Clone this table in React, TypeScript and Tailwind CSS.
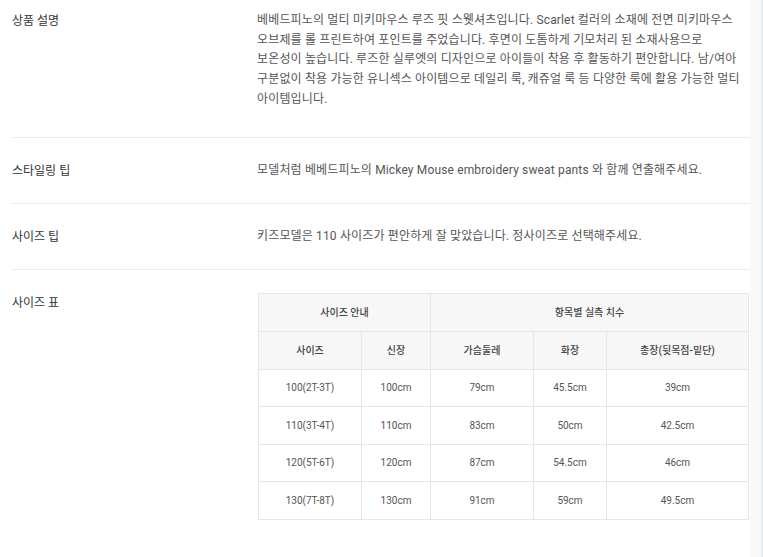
import React from "react";

const font = { fontFamily: 'Roboto, "Noto Sans CJK KR", sans-serif' };

function Row({ label, children, top = "pt-[23px]", bottom = "pb-[22px]" }: { label: string; children: React.ReactNode; top?: string; bottom?: string }) {
  return (
    <div className={`flex ${top} ${bottom} border-b border-[#ebebeb]`}>
      <div className="w-[245px] shrink-0 text-[12px] leading-[20px] text-[#333]">{label}</div>
      <div className="w-[493px] break-keep text-[12px] leading-[19.7px] tracking-[0.15px] text-[#555]">{children}</div>
    </div>
  );
}

const rows = [
  ["100(2T-3T)", "100cm", "79cm", "45.5cm", "39cm"],
  ["110(3T-4T)", "110cm", "83cm", "50cm", "42.5cm"],
  ["120(5T-6T)", "120cm", "87cm", "54.5cm", "46cm"],
  ["130(7T-8T)", "130cm", "91cm", "59cm", "49.5cm"],
];

export default function App() {
  return (
    <div className="flex w-[763px] h-[557px] bg-white overflow-hidden" style={font}>
      <div className="w-[738px] ml-[12px] shrink-0">
        <Row label="상품 설명" top="pt-[11px]" bottom="pb-[27px]">
          베베드피노의 멀티 미키마우스 루즈 핏 스웻셔츠입니다. Scarlet 컬러의 소재에 전면 미키마우스 오브제를 롤 프린트하여 포인트를 주었습니다. 후면이 도톰하게 기모처리 된 소재사용으로 보온성이 높습니다. 루즈한 실루엣의 디자인으로 아이들이 착용 후 활동하기 편안합니다. 남/여아 구분없이 착용 가능한 유니섹스 아이템으로 데일리 룩, 캐쥬얼 룩 등 다양한 룩에 활용 가능한 멀티 아이템입니다.
        </Row>
        <Row label="스타일링 팁">
          모델처럼 베베드피노의 Mickey Mouse embroidery sweat pants 와 함께 연출해주세요.
        </Row>
        <Row label="사이즈 팁">
          키즈모델은 110 사이즈가 편안하게 잘 맞았습니다. 정사이즈로 선택해주세요.
        </Row>
        <div className="flex pt-[23px]">
          <div className="w-[245px] shrink-0 text-[12px] leading-[20px] text-[#333]">사이즈 표</div>
          <div className="flex-1 pl-[1px]">
            <table className="w-[491px] border-collapse text-[10px] text-center">
              <colgroup>
                <col className="w-[103px]" />
                <col className="w-[69px]" />
                <col className="w-[103px]" />
                <col className="w-[73px]" />
                <col />
              </colgroup>
              <thead>
                <tr className="h-[38px] bg-[#f7f7f7] text-[#444]">
                  <th colSpan={2} className="border border-[#e6e6e6] font-medium">사이즈 안내</th>
                  <th colSpan={3} className="border border-[#e6e6e6] font-medium">항목별 실측 치수</th>
                </tr>
                <tr className="h-[38px] bg-[#f7f7f7] text-[#444]">
                  {["사이즈", "신장", "가슴둘레", "화장", "총장(뒷목점-밑단)"].map((h) => (
                    <th key={h} className="border border-[#e6e6e6] font-medium">{h}</th>
                  ))}
                </tr>
              </thead>
              <tbody>
                {rows.map((r) => (
                  <tr key={r[0]} className="h-[37.5px] text-[#555]">
                    {r.map((c, i) => (
                      <td key={i} className="border border-[#e6e6e6]">{c}</td>
                    ))}
                  </tr>
                ))}
              </tbody>
            </table>
          </div>
        </div>
      </div>
      <div className="flex-1 bg-[#f8f8f8]" />
      <div className="w-[2px] bg-[#e4edf5]" />
    </div>
  );
}
